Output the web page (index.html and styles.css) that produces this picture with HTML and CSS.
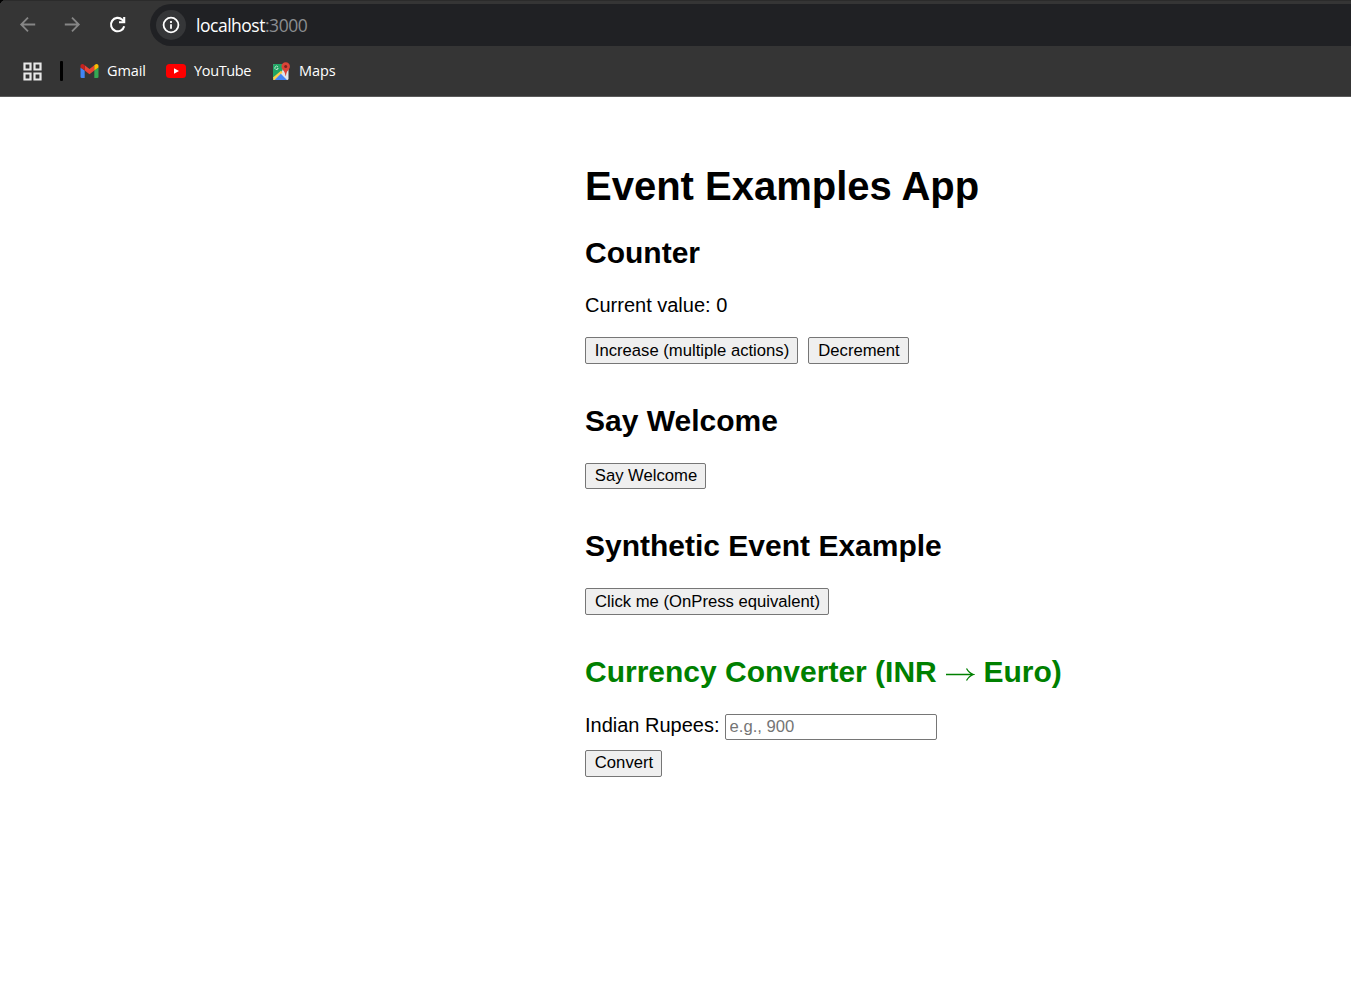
FILE: index.html
```
<!DOCTYPE html>
<html lang="en">
<head>
<meta charset="utf-8">
<title>Event Examples App</title>
<link rel="stylesheet" href="styles.css">
</head>
<body>
<header class="browser">
  <div class="toolbar">
    <svg class="nav back" width="20" height="20" viewBox="0 0 20 20"><path d="M17.2 9.500H3.600M10 2.700 3.200 9.500l6.800 6.800"/></svg>
    <svg class="nav forward" width="20" height="20" viewBox="0 0 20 20"><path d="M2.800 9.500h13.600M10 2.700l6.800 6.800-6.800 6.800"/></svg>
    <svg class="nav reload" width="20" height="20" viewBox="0 0 20 20"><path d="M16.200 11.200A6.700 6.700 0 1 1 14.300 4.700L16 6.500"/><path d="M16.200 2v5.200H11"/></svg>
    <div class="address">
      <span class="site-info"><svg width="18" height="18" viewBox="0 0 18 18"><circle cx="9" cy="9" r="7.400"/><path d="M9 8.200v4.600M9 5v1.900"/></svg></span>
      <span class="url">localhost<span class="port">:3000</span></span>
    </div>
  </div>
  <nav class="bookmarks">
    <svg class="apps" width="19" height="19" viewBox="0 0 19 19"><path d="M1.500 1.500h6v6h-6zM11.500 1.500h6v6h-6zM1.500 11.500h6v6h-6zM11.500 11.500h6v6h-6z"/></svg>
    <span class="divider"></span>
    <a class="bookmark gmail">
      <svg width="19" height="14" viewBox="0 0 19 14"><path fill="#4285f4" d="M.5 3.500 4.700 6.600V14H1.800A1.300 1.300 0 0 1 .5 12.700z"/><path fill="#34a853" d="M18.500 3.500 14.300 6.600V14h2.900a1.300 1.300 0 0 0 1.300-1.300z"/><path fill="#ea4335" d="M4.700 1.300 9.500 4.900l4.800-3.600v5.300l-4.800 3.600-4.800-3.600z"/><path fill="#c5221f" d="M.5 3.500V2C.5.2 2.500-.5 3.800.6l.9.7v5.300z"/><path fill="#fbbc04" d="M18.500 3.500V2c0-1.800-2-2.500-3.300-1.400l-.9.700v5.300z"/></svg>
      <span class="label">Gmail</span>
    </a>
    <a class="bookmark youtube">
      <svg width="20" height="14" viewBox="0 0 20 14"><rect width="20" height="14" rx="3.500" fill="#f00"/><path fill="#fff" d="M8 4.200v5.600L13 7z"/></svg>
      <span class="label">YouTube</span>
    </a>
    <a class="bookmark maps">
      <svg width="18" height="19" viewBox="0 0 18 19"><rect x="1" y="2" width="15.500" height="16" rx="1.500" fill="#dfe5e8"/><path fill="#1fa463" d="M2.500 2h10L10 9.500 1.500 17.500H1v-14A1.500 1.500 0 0 1 2.500 2z"/><path fill="#fbd04b" d="M1 15.500 9 8.800l1.600 1.600L2.800 18H1.500z"/><path fill="#4285f4" d="M2.600 18 8.800 11.800 15 18z"/><path fill="none" stroke="#b9e3ca" stroke-width="1" d="M5.900 4.800A1.700 1.700 0 1 0 6.200 6.300H5"/><path fill="#db4437" d="M13.700.3a4.100 4.100 0 0 0-4.200 4.300c0 3.300 3.600 4 3.900 9.200h.6c.3-5.200 3.900-5.900 3.900-9.200A4.100 4.100 0 0 0 13.700.3z"/><circle cx="13.700" cy="4.500" r="1.500" fill="#7b231e"/></svg>
      <span class="label">Maps</span>
    </a>
  </nav>
</header>
<main class="app">
  <h1>Event Examples App</h1>
  <section>
    <h2>Counter</h2>
    <p>Current value: 0</p>
    <div class="actions"><button class="increase">Increase (multiple actions)</button><button class="decrement">Decrement</button></div>
  </section>
  <section>
    <h2>Say Welcome</h2>
    <button class="welcome">Say Welcome</button>
  </section>
  <section>
    <h2>Synthetic Event Example</h2>
    <button class="press">Click me (OnPress equivalent)</button>
  </section>
  <section>
    <h2 class="converter-title">Currency Converter (INR <svg class="arrow" role="img" aria-label="to" width="30" height="16" viewBox="0 0 30 16"><path d="M1 8.500h27M21.500 2.500q2.500 4.500 7 6-4.500 1.500-7 6"/></svg> Euro)</h2>
    <div class="field"><label for="rupees">Indian Rupees:</label><input id="rupees" placeholder="e.g., 900"></div>
    <button class="convert">Convert</button>
  </section>
</main>
</body>
</html>
```
FILE: styles.css
```
* { box-sizing: border-box; }
body { margin: 0; background: #fff; color: #000; font-family: "Liberation Sans", Arial, sans-serif; overflow: hidden; }
svg { display: block; flex: none; }

.browser { height: 97px; padding-top: 4px; background: radial-gradient(circle at 6px 6px, transparent 6px, #000 6.500px) 0 0 / 4px 4px no-repeat, linear-gradient(#2b2b2b 0 1px, #353535 1px); border-bottom: 1px solid #5a5a5a; font-family: "Open Sans", sans-serif; }
.toolbar { display: flex; align-items: center; height: 42px; padding-left: 18px; }
.nav { fill: none; stroke: #868686; stroke-width: 1.8; }
.forward { margin-left: 24px; }
.reload { margin-left: 26px; stroke: #fff; stroke-width: 2.100; }
.address { display: flex; align-items: center; flex: 1; height: 42px; margin-left: 22px; padding-left: 6px; border-radius: 21px 0 0 21px; background: #202124; }
.site-info { display: grid; place-items: center; width: 30px; height: 30px; border-radius: 50%; background: #353638; }
.site-info svg { fill: none; stroke: #fff; stroke-width: 1.800; }
.url { margin-left: 10px; color: #fff; font-size: 17.500px; letter-spacing: -0.480px; white-space: nowrap; }
.port { color: #8b8d90; }
.bookmarks { display: flex; align-items: center; height: 50px; padding-left: 23px; }
.apps { fill: none; stroke: #e8e8e8; stroke-width: 2.200; }
.divider { width: 3px; height: 20px; margin-left: 18px; border-radius: 1px; background: #000; }
.bookmark { display: flex; align-items: center; color: #fff; font-size: 14.500px; white-space: nowrap; }
.gmail { margin-left: 17px; width: 86px; gap: 8px; }
.youtube { width: 106px; gap: 8px; }
.maps { gap: 9px; }
.label { padding-bottom: 2px; letter-spacing: -0.100px; }
.youtube .label { letter-spacing: -0.350px; }

.app { margin-left: 585px; padding-top: 66px; }
h1 { margin: 0 0 27px; font-size: 40px; line-height: 46px; }
h2 { margin: 0 0 25px; font-size: 30px; line-height: 34px; }
p { margin: -1px 0 20px; font-size: 20px; line-height: 23px; }
section { margin-bottom: 40px; }
button { display: block; height: 27px; padding: 0 0 0 1px; border: 1px solid #767676; border-radius: 2px; background: #efefef; color: #000; font: 16.667px/19px "Liberation Sans", Arial, sans-serif; white-space: nowrap; }
.actions { display: flex; gap: 10px; }
.increase { width: 213px; }
.decrement { width: 101px; }
.welcome { width: 121px; height: 26px; padding-bottom: 1px; }
.press { width: 244px; }
.convert { width: 77px; padding-bottom: 2px; }
.converter-title { color: #008000; }
.arrow { display: inline-block; vertical-align: 0; fill: none; stroke: currentColor; stroke-width: 1.300; }
.field { display: flex; align-items: center; gap: 5px; height: 26px; margin-bottom: 10px; }
.field label { font-size: 20px; line-height: 23px; margin-top: -3px; }
.field input { width: 212px; height: 26px; padding: 0 4px; border: 1px solid #767676; border-radius: 2px; font: 16.667px "Liberation Sans", Arial, sans-serif; }
.field input::placeholder { color: #757575; }
```
